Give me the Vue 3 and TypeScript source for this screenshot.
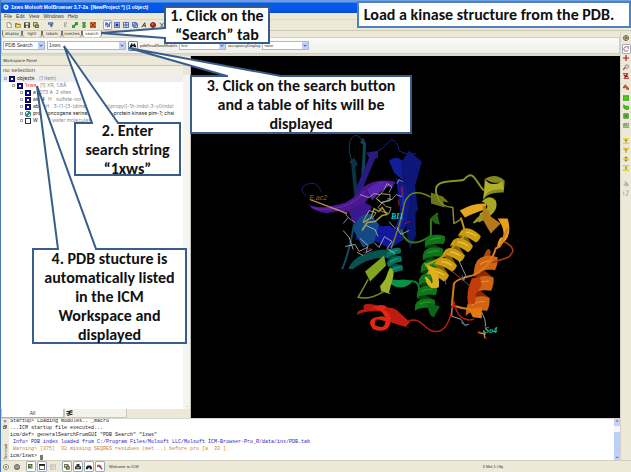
<script setup lang="ts">
import { ref } from 'vue'

interface Shape { d: string; f?: string; s?: string; w?: number }
interface Icon { name: string; shapes: Shape[]; framed?: boolean; gap?: boolean; wide?: boolean }

const page = 'M1.5 .5h3.5l2 2v5h-5.5z'
const mainIcons: Icon[] = [
  { name: 'New', shapes: [{ d: page, f: '#fffbe0', s: '#8a8650' }, { d: 'M5 .5v2h2', s: '#8a8650' }] },
  { name: 'Open', shapes: [{ d: 'M.5 7V2h2.500l1 1h3v4z', f: '#c9a42c', s: '#6d5a1c' }, { d: 'M1 7l1.500-3h5L6 7z', f: '#f4dc70' }] },
  { name: 'Save', shapes: [{ d: 'M.5 1h7v6.500h-7z', f: '#5f5a20', s: '#222' }, { d: 'M2 1h4v2.500H2zM2.500 5h3v2.500h-3z', f: '#eee' }] },
  { name: 'Save picture', shapes: [{ d: 'M.5 .5h5v5h-5z', f: '#e8dc60', s: '#4a4620' }, { d: 'M3 4h4.500v3.500H3z', f: '#b3c050', s: '#333' }] },
  { name: 'Tools', gap: true, shapes: [{ d: 'M.5 1h6v2h-6z', f: '#98b4e8', s: '#2b438f' }, { d: 'M4.500 3v4M2.500 5h4', s: '#2d3c8c' }] },
  { name: 'Residue', gap: true, shapes: [{ d: 'M2 7V1h2.500q2 1.500-2.500 3l3 3', s: '#999990' }] },
  { name: 'Link', shapes: [{ d: 'M.5 4.500h3v3h-3zM4.500 .5h3v3h-3z', f: '#34c63a', s: '#167a1c' }, { d: 'M3 5l3-3', s: '#169020', w: 2 }] },
  { name: 'Chain', shapes: [{ d: 'M2.500 0h3v3h-3zM2.500 4h3v3.500h-3z', f: '#48d63d', s: '#207c25' }] },
  { name: 'Clear', shapes: [{ d: 'M.5 .5h7v7h-7z', f: '#e5a42a', s: '#9a4510' }, { d: 'M1 1l6 6M7 1L1 7', s: '#9d2813', w: 1.5 }] },
  { name: 'Full display', gap: true, framed: true, shapes: [{ d: 'M0 7V1h2v3H0M3 1v6h1q2-3-1-6M6 7V1h2', s: '#293db2' }] },
  { name: 'Center', shapes: [{ d: 'M.5 .5h7v7h-7z', f: '#dfe8ff', s: '#2842a0' }, { d: 'M2 2h4v4H2z', f: '#263c9d' }] },
  { name: 'Grid', shapes: [{ d: 'M.5 .5h7v7h-7zM4 .5v7M.5 4h7', f: '#e1eafa', s: '#203b9a' }] },
  { name: 'Windows', shapes: [{ d: 'M.5 .5h5v5h-5zM2.500 2.500h5v5h-5z', f: '#d8e6ff', s: '#223d9a' }] },
  { name: 'Font', shapes: [{ d: 'M1 7l4-6 1 6M2.500 5h3', s: '#111' }] },
  { name: 'Sphere', shapes: [{ d: 'M4 .5a3.500 3.500 0 1 0 .1 0', f: '#b52418', s: '#601510' }, { d: 'M2.500 2h2v1.500h-2z', f: '#f8a08a' }] },
  { name: 'Cut', shapes: [{ d: 'M1 1l5 6M6 1L2 7', s: '#333a62' }] },
]

const sideIcons: Icon[] = [
  { name: 'Settings', shapes: [{ d: 'M4 .5a3.500 3.500 0 1 0 .1 0', f: '#a6a475', s: '#6b6a42', w: 1.2 }, { d: 'M3 4h2', s: '#33331c', w: 1.5 }] },
  { name: 'Rotate', framed: true, gap: true, shapes: [{ d: 'M4 1Q1 1 1 4t3 3l3-1M4 1h3v3', s: '#93324b' }] },
  { name: 'Translate', shapes: [{ d: 'M4 0v8M0 4h8', s: '#a71919', w: 1.5 }] },
  { name: 'Zoom', shapes: [{ d: 'M5 1a2.300 2.300 0 1 0 .1 0', f: '#ddd', s: '#666' }, { d: 'M3 5L0 7.500', s: '#c9231b', w: 1.5 }] },
  { name: 'Clip', shapes: [{ d: 'M0 1h7M1 7h7M1 3l6 2M6 2L2 6', s: '#a2191e', w: 1.5 }] },
  { name: 'Pick', gap: true, shapes: [{ d: 'M0 5l3-4 3 3 2 3H5V5z', f: '#d77628', s: '#a72718' }] },
  { name: 'Box', gap: true, shapes: [{ d: 'M0 1h8v6H0z', f: '#55cb16', s: '#2a8b0d' }] },
  { name: 'Lasso', shapes: [{ d: 'M1 1l2 2q5-1 5 2t-4 2-3-4z', f: '#5ec71b', s: '#257c17' }] },
  { name: 'Residue box', shapes: [{ d: 'M1 1h6v6H1z', f: '#70b348', s: '#357b22' }, { d: 'M3 3h2v2H3z', f: '#0b740b' }] },
  { name: 'All', shapes: [{ d: 'M0 7h8M1 6V2h2v4M5 1v5M7 1v5M1 4h2', s: '#477b37' }] },
  { name: 'Top', wide: true, shapes: [{ d: 'M0 0h8v2H0zM0 6h8v2H0z', f: '#e8d13b' }, { d: 'M4 2v4M2 3h4', s: '#8d5d13' }] },
  { name: 'Front', shapes: [{ d: 'M0 1h8v2H0z', f: '#e2bf28' }, { d: 'M4 3v5M2 4h4', s: '#9c6814' }] },
  { name: 'Middle', shapes: [{ d: 'M0 3h8v2H0z', f: '#e5d02e' }, { d: 'M4 0v8M2 2h4M2 6h4', s: '#90801c' }] },
  { name: 'Slab', shapes: [{ d: 'M0 0h8v2H0zM0 6h8v2H0z', f: '#e2d02c' }, { d: 'M4 2v4M3 4h2', s: '#625f18' }] },
  { name: 'Hand', wide: true, shapes: [{ d: 'M2 1l3 1 1 3-2 2-3-3h5l1 3', s: '#929289' }] },
  { name: 'Number', shapes: [{ d: 'M1 7V2M4 1h3v2L4 7h3', s: '#a3a195' }] },
]

const statusIcons: Icon[] = [
  { name: 'Stop', shapes: [{ d: 'M4 .5a3.500 3.500 0 1 0 .1 0M2.500 2.500l3 3M5.500 2.500l-3 3', s: '#77776c' }] },
  { name: 'Halt', shapes: [{ d: 'M2.500 .5h3l2 2v3l-2 2h-3l-2-2v-3z', f: '#85857b', s: '#66665d' }, { d: 'M2 4h4', s: '#ccc' }] },
  { name: 'Workspace', framed: true, gap: true, shapes: [{ d: 'M0 0h6v6H0z', f: '#56653a' }, { d: 'M1 2h3M3 4h4v3', s: '#cee68d' }] },
  { name: 'Terminal', framed: true, shapes: [{ d: 'M.5 .5h7v7h-7z', f: '#fff', s: '#222' }, { d: 'M0 0h8v2.500H0z', f: '#222' }] },
  { name: 'Table', shapes: [{ d: 'M.5 1h7v6h-7zM.5 3h7M3 3v4', s: '#bbb8ab' }] },
  { name: 'Copy', framed: true, gap: true, shapes: [{ d: 'M.5 .5h5v4h-5z', f: '#e8dc5b', s: '#333' }, { d: 'M3 3h4v4H3z', f: '#acba4a', s: '#333' }] },
  { name: 'Print', framed: true, shapes: [{ d: 'M0 3h8v4H0zM2 0h4v3H2z', f: '#333' }, { d: 'M2 5h4', s: '#fff' }] },
  { name: 'Find', framed: true, shapes: [{ d: 'M0 4l2-2h4l2 2v3H5V5H3v2H0z', f: '#222' }] },
  { name: 'Pointer', framed: true, shapes: [{ d: 'M0 1h4v3H0z', f: '#777' }, { d: 'M3 3l4 4M5 2v3', s: '#b32c22', w: 1.5 }] },
]

const tabs = ['display', 'light', 'labels', 'meshes', 'search']
const activeTab = ref('search')
const query = ref('1xws')

interface Node { depth: number; name: string; note: string; icon: 'on' | 'seq' | 'off'; red?: boolean }
const nodes: Node[] = [
  { depth: 0, name: 'objects', note: '  (1 item)', icon: 'on' },
  { depth: 1, name: '1xws', note: ' [1] XR, 1.8Å', icon: 'on', red: true },
  { depth: 2, name: 'a', note: ' 273 A  2 sites', icon: 'on' },
  { depth: 2, name: 'aso4', note: ' H   sulfate-ion (so4-)', icon: 'on' },
  { depth: 2, name: 'abi1', note: ' H   3-{1-[3-(dimethylamino)propyl]-1h-indol-3-yl}indol', icon: 'on' },
  { depth: 2, name: 'proto-oncogene serine/threonine-protein kinase pim-1; chai', note: '', icon: 'seq' },
  { depth: 2, name: 'W', note: ' 242 water molecules', icon: 'off' },
]

function pt(x: number, y: number): string {
  return `${x.toFixed(1)} ${y.toFixed(1)}`
}

// Alternating back and front bands wound around the segment (x1,y1)-(x2,y2).
function helix(x1: number, y1: number, x2: number, y2: number, turns: number, r: number, back: string, front: string, shine: string): Shape[] {
  const len = Math.hypot(x2 - x1, y2 - y1)
  const ux = (x2 - x1) / len
  const uy = (y2 - y1) / len
  const step = len / turns
  const at = (along: number, side: number): string => pt(x1 + ux * along - uy * side, y1 + uy * along + ux * side)
  const backs: Shape[] = []
  const fronts: Shape[] = []
  for (let i = 0; i < turns; i++) {
    const a = i * step
    const h = step * 0.64
    fronts.push({ f: front, d: `M${at(a, -r)}C${at(a - step * 0.1, -r * 0.2)} ${at(a + step * 0.1, r * 0.9)} ${at(a + step * 0.45, r)}Q${at(a + step * 0.6, r * 1.15)} ${at(a + step * 0.45 + h, r)}C${at(a + h + step * 0.2, r * 0.8)} ${at(a + h, -r * 0.2)} ${at(a + h, -r)}Q${at(a + h * 0.5, -r * 1.2)} ${at(a, -r)}Z` })
    fronts.push({ s: shine, w: 1.2, d: `M${at(a + step * 0.22, -r * 0.6)}Q${at(a + step * 0.25, r * 0.1)} ${at(a + step * 0.5, r * 0.6)}` })
    if (i < turns - 1) {
      backs.push({ f: back, d: `M${at(a + step * 0.5, r)}L${at(a + step, -r)}L${at(a + step + h * 0.8, -r)}Q${at(a + step, 0)} ${at(a + step * 0.5 + h, r)}Z` })
    }
  }
  return [...backs, ...fronts]
}

const ribbons: Shape[] = [
  { d: 'M356 217L351 164 349 162 354 158 358 165 355 167 360 216', f: '#0b3346' },
  { d: 'M359 214L363 145 360 143 363 138 366 144 364 187 361 216', f: '#104259' },
  { d: 'M352 162C345 144 352 134 357 136Q362 138 363 143', s: '#123f57' },
  { d: 'M354 193L369 158 366 153 378 151 378 158 375 159 360 195', f: '#291a80' },
  { d: 'M377 152Q385 147 391 140Q398 141 399 151Q405 155 416 154', s: '#1a1f92' },
  { d: 'M389 161Q397 154 405 164L416 181 410 187 400 178 394 173z', f: '#101e99' },
  { d: 'M401 163L409 151 422 162 415 186 418 210 408 226 403 187z', f: '#0c1778' },
  { d: 'M396 178Q411 185 410 211Q406 235 393 244L380 245Q398 231 400 211z', f: '#101a8d' },
  { d: 'M401 188Q407 208 399 230', s: '#2330b8', w: 1.5 },
  { d: 'M362 218Q374 229 390 226L405 239 390 249 374 241 355 240z', f: '#12189c' },
  { d: 'M410 196l5-5 1 45-6 14-4-20z', f: '#0b1770' },
  { d: 'M321 192Q317 180 305 185Q298 191 306 196', s: '#3d126e' },
  { d: 'M306 204Q319 211 338 205Q351 203 363 188Q374 178 396 182L392 188Q378 184 368 199Q358 216 340 211Q318 218 307 204', f: '#4b178e' },
  { d: 'M367 189L377 183Q385 180 393 185Q382 188 372 201', f: '#5825ac' },
  { d: 'M312 208Q326 212 342 207Q356 203 365 191', s: '#6a2cb4' },
  { d: 'M348 211L364 203 372 207 361 228 354 225z', f: '#3c168c' },
  { d: 'M353 230Q358 214 370 214L379 225 374 243 363 248z', f: '#134a86' },
  { d: 'M354 224Q350 250 342 270', s: '#0e4c60', w: 2 },
  { d: 'M348 269Q357 251 387 250L397 248 395 260Q374 254 352 270z', f: '#07534f' },
  ...helix(393, 249, 396, 275, 3, 7, '#03443b', '#08705a', '#129a7e'),
  { d: 'M387 271Q388 283 402 280L413 281 410 285Q398 293 387 281z', f: '#089349' },
  { d: 'M411 282Q420 281 419 293L424 299', s: '#087d32', w: 2 },
  { d: 'M365 272L384 256 386 266 383 269 370 282 372 286z', f: '#80a621' },
  { d: 'M385 280L390 268Q395 271 393 278L389 293 391 295 381 292 380 287z', f: '#9bb529' },
  { d: 'M368 280Q362 291 358 298Q369 301 384 292', s: '#739121', w: 1.5 },
  { d: 'M391 249Q400 225 403 210Q407 184 432 198', s: '#71861d', w: 1.5 },
  { d: 'M431 193l12 4 6 6-6-1 2 6-14-4z', f: '#68751b' },
  { d: 'M437 196C431 178 452 183 464 180C474 169 475 181 484 191', s: '#879022', w: 2 },
  { d: 'M437 196Q440 207 453 208L454 224 462 219', s: '#8a8b22', w: 1.5 },
  { d: 'M401 230C406 249 420 244 431 236Q431 226 431 220L438 214', s: '#347918', w: 2 },
  { d: 'M430 219l7-6 3 12-5-1z', f: '#236313' },
  { d: 'M485 179Q496 173 505 181L504 193Q489 192 483 200L485 187Q495 191 500 183Q491 184 485 179', f: '#858a1e' },
  { d: 'M485 179Q490 188 503 182L504 190Q487 188 484 200z', f: '#b2b02b' },
  { d: 'M482 202Q490 194 496 201Q501 213 479 223L480 214Q494 207 482 202', f: '#a7a728' },
  { d: 'M473 223Q482 212 492 210L483 220 474 224z', f: '#9d9121' },
  ...helix(436, 235, 424, 312, 6, 9, '#06410c', '#107519', '#259a2c'),
  ...helix(474, 231, 434, 280, 5, 9, '#806407', '#cf9d14', '#f0c53c'),
  { d: 'M424 263L435 269Q440 276 439 288Q427 292 425 277Q428 277 432 284Q435 280 424 263', f: '#dfb21d' },
  { d: 'M427 304l13 3-6 11q-5 0-7-14', f: '#0a6517' },
  { d: 'M425 266Q453 255 457 240Q466 242 464 228L461 218', s: '#bf9716', w: 2 },
  { d: 'M460 211Q473 203 487 204L485 210Q473 214 465 218z', f: '#e6a622' },
  { d: 'M483 205Q489 211 491 217L501 224 491 234 483 220z', f: '#b47919' },
  { d: 'M498 219L508 219Q513 236 503 244Q499 250 497 249Q499 236 503 238Q506 231 498 219', f: '#ea9e1d' },
  { d: 'M486 252Q489 247 491 252L489 267 480 266z', f: '#a44913' },
  ...helix(488, 256, 476, 317, 3, 10, '#8a2808', '#cf6414', '#ee8d32'),
  { d: 'M472 279l8-2 2 9-6 9-1 10-7-1q-2-12 4-25z', f: '#c33c0c' },
  { d: 'M469 310l13-2 0 11-9-1z', f: '#e77913' },
  { d: 'M508 229L500 247 496 249Q490 269 473 276Q455 280 454 285L452 306Q461 309 471 310', s: '#d97c1b', w: 2 },
  { d: 'M504 242Q520 250 508 258Q500 261 492 263', s: '#a93d0d', w: 1.5 },
  { d: 'M451 271L466 283 471 288', s: '#9a4c15' },
  { d: 'M357 316Q356 311 364 310Q360 302 377 306L382 312Q371 311 360 314', f: '#b31a10' },
  { d: 'M371 309Q389 299 391 319Q390 336 373 330Q364 319 381 317Q387 317 385 322Q373 317 375 326Q387 332 385 318Q382 309 371 309', f: '#e22614' },
  { d: 'M383 310Q390 306 397 311L410 323 406 327 410 329 390 323Q394 316 383 310', f: '#c01b10' },
  { d: 'M408 322C424 316 424 335 439 332C448 330 452 314 454 302Q458 324 474 320', s: '#b4200e', w: 1.5 },
]

const sticks: Shape[] = [
  { d: 'M310 200L347 214', s: '#dea06a', w: 1.5 },
  { d: 'M360 195l9 3 5-4 6 1 4-5 3-6 5 3-3 6M387 199l5 1 4-5 6 2M377 199l4 4 10-3M345 214l3 4-5 6M348 218l7 5M397 184l2-4 4 2', s: '#aaa9b5' },
  { d: 'M376 199l5-5 9 1 0 6-9 2zM363 222l6-11 7 2-4 6M378 208l4-5 4 4 5 1-2 6-7-2z', s: '#c8c47b' },
  { d: 'M363 223l8-5 3-9 5 3 3-4 5 7-5 1-7 6-8 1-5 8', s: '#c6b94c', w: 1.5 },
  { d: 'M343 231l6 7 4 12M345 247l10-2 4 7 8-4M360 239l8 7-2 7 6-3M374 243l5 5 5-10M357 253l6 3M384 237l8 5-5 7 8 5M366 226l9 4 3 7M397 228l4 7 8-4M389 222l6 7', s: '#bdbfc4' },
  { d: 'M363 253l3 0M402 186l1 10M405 224l5-2M367 250l4-1M398 200l1 6', s: '#b91d25' },
  { d: 'M452 308l0 9 9 3 4 6 4-1M459 261l4 9 3 6-3 5M482 313l3 7 1 7', s: '#c1c2c8' },
  { d: 'M461 323l6 4M445 280l1 5M462 276l3 5', s: '#4e79d5' },
  { d: 'M478 333l8 2M484 331l1 8', s: '#d2bf27', w: 1.5 },
  { d: 'M478 333l3 0M485 337l2 3M485 326l1 4', s: '#db291a' },
]
</script>

<template>
  <div class="app">
    <header class="titlebar">
      <svg class="logo" viewBox="0 0 8 8"><circle cx="4" cy="4" r="3.500" fill="#d7ecff" /><path d="M2 5l2-3 2 3z" fill="#176fc4" /></svg>
      <h1>1xws Molsoft MolBrowser 3.7-2a&nbsp; [NewProject *] (1 object)</h1>
    </header>
    <nav class="menu">
      <button v-for="m in ['File', 'Edit', 'View', 'Windows', 'Help']" :key="m" type="button">{{ m }}</button>
    </nav>
    <div class="toolbar">
      <button v-for="i in mainIcons" :key="i.name" type="button" class="tool" :class="{ framed: i.framed, gap: i.gap }" :aria-label="i.name">
        <svg viewBox="0 0 8 8"><path v-for="(p, n) in i.shapes" :key="n" :d="p.d" :fill="p.f ?? 'none'" :stroke="p.s ?? 'none'" :stroke-width="p.w ?? 1" /></svg>
      </button>
    </div>

    <div class="body">
      <div class="content">
        <div class="tabs">
          <button v-for="t in tabs" :key="t" type="button" :class="{ active: t === activeTab }" @click="activeTab = t">{{ t }}</button>
        </div>
        <form class="search" @submit.prevent>
          <span class="combo kind"><select aria-label="Search type"><option>PDB Search</option></select><svg viewBox="0 0 6 8"><path d="M1.500 3L3 5l1.500-2" /></svg></span>
          <span class="combo query"><input v-model="query" aria-label="Search string" /><svg viewBox="0 0 6 8"><path d="M1.500 3L3 5l1.500-2" /></svg></span>
          <button class="find" type="submit" aria-label="Search"><svg viewBox="0 0 10 8"><path d="M0 5l2-4h2v2h2V1h2l2 4v2H6V5H4v2H0z" fill="#111" /></svg></button>
          <label for="models">pdbReadNewModels</label>
          <span class="combo small"><select id="models"><option>first</option></select><svg viewBox="0 0 6 8"><path d="M1.500 3L3 5l1.500-2" /></svg></span>
          <label for="occ">occupancyDisplay</label>
          <span class="combo small"><select id="occ"><option>none</option></select><svg viewBox="0 0 6 8"><path d="M1.500 3L3 5l1.500-2" /></svg></span>
        </form>

        <div class="workarea">
          <aside class="workspace">
            <h2>Workspace Panel</h2>
            <div class="selection">no selection</div>
            <div class="treewrap">
              <ul class="tree">
                <li v-for="n in nodes" :key="n.name" :class="['depth' + n.depth, { red: n.red }]">
                  <span class="expander"></span>
                  <span class="mark" :class="n.icon"></span>
                  <span class="name">{{ n.name }}</span>
                  <span class="note">{{ n.note }}</span>
                </li>
              </ul>
              <div class="scroll"><span>⌄</span></div>
            </div>
            <div class="sheets">
              <button type="button" class="current">All</button>
              <button type="button" aria-label="Sequences"><svg viewBox="0 0 8 8"><path d="M0 2h3l2 4h3M0 5h3l2-4h3M1 7h3M5 3h3" fill="none" stroke="#222" stroke-width="1.500" /></svg></button>
            </div>
          </aside>
          <main class="viewer">
            <svg viewBox="191 56 429 363" preserveAspectRatio="xMidYMid meet" role="img" aria-label="Kinase structure 1xws">
              <path v-for="(p, n) in ribbons" :key="'r' + n" :d="p.d" :fill="p.f ?? 'none'" :stroke="p.s ?? 'none'" :stroke-width="p.w ?? 1" stroke-linejoin="round" />
              <path v-for="(p, n) in sticks" :key="'s' + n" :d="p.d" fill="none" :stroke="p.s" :stroke-width="p.w ?? 1" stroke-opacity="0.8" />
              <text x="309" y="200" class="site">E.ac2</text>
              <text x="391" y="219" class="ligand">BI1</text>
              <text x="485" y="334" class="ligand">So4</text>
            </svg>
          </main>
        </div>

        <section class="terminal">
          <div class="dock"><span>×</span><svg viewBox="0 0 6 6"><path d="M.5 2h3.500v3.500H.5zM2 2V.5h3.500V4H4" fill="none" stroke="#333" /></svg><span class="vertical">Terminal</span></div>
          <pre>Startup&gt; Loading modules.. _macro
...ICM startup file executed...
icm/def&gt; generalSearchFromGUI "PDB Search" "1xws"
<span class="info"> Info&gt; PDB index loaded from C:/Program Files/Molsoft LLC/Molsoft ICM-Browser-Pro_R/data/inx/PDB.tab</span>
<span class="warn"> Warning&gt; [375]  32 missing SEQRES residues (met ..) before pro [a  33 ]</span>
icm/1xws&gt; <i class="cursor"></i></pre>
          <div class="thumbbar"><b>⌃</b><span></span><b>⌄</b></div>
        </section>
      </div>

      <div class="side">
        <button v-for="i in sideIcons" :key="i.name" type="button" class="tool" :class="{ framed: i.framed, gap: i.gap, wide: i.wide }" :aria-label="i.name">
          <svg viewBox="0 0 8 8"><path v-for="(p, n) in i.shapes" :key="n" :d="p.d" :fill="p.f ?? 'none'" :stroke="p.s ?? 'none'" :stroke-width="p.w ?? 1" /></svg>
        </button>
      </div>
    </div>

    <footer class="status">
      <button v-for="i in statusIcons" :key="i.name" type="button" class="tool" :class="{ framed: i.framed, gap: i.gap }" :aria-label="i.name">
        <svg viewBox="0 0 8 8"><path v-for="(p, n) in i.shapes" :key="n" :d="p.d" :fill="p.f ?? 'none'" :stroke="p.s ?? 'none'" :stroke-width="p.w ?? 1" /></svg>
      </button>
      <span class="welcome">Welcome to ICM</span>
      <span class="count">3 Mol 1 Obj</span>
    </footer>

    <div class="callout headline">Load a kinase structure from the PDB.</div>
    <div class="callout one">1. Click on the<br />“Search” tab</div>
    <div class="callout two">2. Enter<br />search string<br />“1xws”</div>
    <div class="callout three">3. Click on the search button<br />and a table of hits will be<br />displayed</div>
    <div class="callout four">4. PDB stucture is<br />automatically listed<br />in the ICM<br />Workspace and<br />displayed</div>
    <svg class="tails" width="420" height="260" viewBox="0 0 420 260">
      <path d="M166 28H165L101 33 165 38H166" />
      <path d="M92 124V123L64 46 118 123V124" />
      <path d="M227 77V76L129 48 281 76V77" />
      <path d="M58 250V249L37 86 96 249V250" />
    </svg>
  </div>
</template>

<style>
body { margin: 0; }
</style>

<style scoped>
* { box-sizing: border-box; }
.app { position: relative; display: flex; flex-direction: column; height: 100vh; overflow: hidden; background: #ece9d8; font: 5px/7px "Liberation Sans", Arial, sans-serif; color: #333; border-left: 1px solid #4a7ac0; }
button, input, select { font: inherit; color: inherit; padding: 0; margin: 0; border: 0; background: none; border-radius: 0; appearance: none; }
h1, h2, ul, pre { margin: 0; padding: 0; }
svg { display: block; }
.titlebar { flex: 0 0 13px; display: flex; align-items: center; gap: 2px; padding: 1px 2px 0; background: linear-gradient(#6d9fe0 0 2px, #075bea 3px, #0358ec 9px, #0a4bcb); }
.logo { width: 6px; height: 6px; }
h1 { font-size: 5px; line-height: 8px; color: #fff; white-space: nowrap; }
.menu { flex: 0 0 7px; display: flex; gap: 4px; padding: 0 3px; border-bottom: 1px solid #dbd7c3; }
.menu button { line-height: 6px; }
.toolbar { flex: 0 0 11px; display: flex; align-items: center; gap: 2px; padding-left: 4px; border-bottom: 1px solid #cbc8b7; }
.tool { display: flex; align-items: center; justify-content: center; flex: none; width: 7px; height: 8px; }
.tool svg { width: 6px; height: 6px; }
.toolbar .gap { margin-left: 6px; }
.framed { background: #fff; box-shadow: 0 0 0 1px #9baabd; border-radius: 1px; }
.body { flex: 1; min-height: 0; display: flex; }
.content { flex: 1; min-width: 0; display: flex; flex-direction: column; }
.tabs { flex: 0 0 6px; display: flex; padding-left: 1px; }
.tabs button { width: 20px; font: 4px/6px "DejaVu Sans", sans-serif; border: 1px solid #777466; border-width: 0 1px; border-radius: 0 0 3px 3px; }
.tabs .active { background: #fff; }
.search { flex: 0 0 17px; display: flex; align-items: center; gap: 2px; padding: 0 1px; background: linear-gradient(#fafaf8, #efeee8); border: 1px solid #d2cfc0; font-size: 4px; }
.combo { display: flex; height: 9px; border: 1px solid #a9b9d0; background: #fff; }
.combo select, .combo input { flex: 1; min-width: 0; padding-left: 1px; outline: 0; font-size: 5px; }
.combo svg { flex: none; width: 6px; height: 7px; background: #c1d2f8; }
.combo path { fill: none; stroke: #344d83; stroke-width: 1; }
.kind { width: 42px; }
.query { width: 79px; }
.small { width: 47px; }
.small select { font-size: 4px; }
.find { width: 10px; height: 10px; padding: 1px; background: #f6f8fd; border: 1px solid #6d829f; border-radius: 1px; }
.workarea { flex: 1; min-height: 0; display: flex; border-top: 2px solid #dedbcb; }
.workspace { flex: 0 0 190px; display: flex; flex-direction: column; border-right: 1px solid #c4c2b6; }
h2 { flex: 0 0 9px; padding-left: 2px; font: 4px/9px "DejaVu Sans", sans-serif; border-bottom: 1px solid #c6c3b2; }
.selection { flex: 0 0 9px; padding-left: 2px; line-height: 9px; font-size: 6px; color: #555; background: #f0eee5; border-right: 7px solid #e8e5db; }
.treewrap { flex: 1; min-height: 0; display: flex; background: #fff; }
.tree { flex: 1; min-width: 0; list-style: none; overflow: hidden; font: 5px/7px Inter, "Noto Sans", sans-serif; color: #222; }
.tree li { display: flex; align-items: center; gap: 2px; height: 7px; white-space: pre; }
.depth0 { padding-left: 3px; background: #ededed; }
.depth1 { padding-left: 11px; }
.depth2 { padding-left: 19px; }
.expander { flex: none; width: 3px; height: 3px; border: 1px solid #aaa; }
.mark { flex: none; width: 6px; height: 6px; background: #0b0b86; border: 1px solid #070745; }
.mark.on { background: radial-gradient(#fff 0 1px, #1010a8 1px); }
.mark.off { background: #fff; border-color: #333; }
.mark.seq { background: linear-gradient(135deg, #fff 0 35%, #248a8c 35% 65%, #fff 65%); border-color: #477a90; border-radius: 2px; }
.red .name { color: #f02626; }
.note { color: #8a8a8a; }
.scroll { flex: 0 0 7px; display: flex; align-items: flex-end; justify-content: center; background: #f5f4ee; color: #bbb; }
.sheets { flex: 0 0 9px; display: flex; background: #ece9d8; }
.sheets button { width: 63px; border: 1px solid #cbc8ba; border-top: 0; background: #f4f2e9; }
.sheets svg { width: 7px; height: 6px; margin-left: 1px; }
.sheets .current { background: #fff; border-bottom: 1px solid #e8a33a; }
.viewer { flex: 1; min-width: 0; background: #000; }
.viewer svg { width: 100%; height: 100%; }
.site { font: italic 7px "Liberation Sans", sans-serif; fill: #a35f24; }
.ligand { font: italic bold 8px "Liberation Serif", serif; fill: #16c9cf; }
.terminal { flex: 0 0 42px; display: flex; border: solid #d8d7cf; border-width: 1px 0 0; background: #fff; overflow: hidden; }
.dock { flex: 0 0 8px; display: flex; flex-direction: column; align-items: center; padding-bottom: 1px; background: #ece9d8; line-height: 5px; }
.dock svg { width: 4px; height: 4px; margin-top: 1px; }
.vertical { margin-top: auto; writing-mode: vertical-rl; transform: rotate(180deg); font-size: 4px; }
pre { flex: 1; min-width: 0; padding-left: 1px; align-self: flex-end; font: 5px/7px "Liberation Mono", monospace; color: #222; }
.info { color: #2525c8; }
.warn { color: #c9852b; }
.cursor { display: inline-block; width: 3px; height: 5px; background: #777; vertical-align: bottom; }
.thumbbar { flex: 0 0 6px; display: flex; flex-direction: column; background: #f4f5fb; text-align: center; color: #344d83; }
.thumbbar b { flex: 0 0 6px; line-height: 7px; background: #c1d2f8; }
.thumbbar span { flex: 1; margin-top: 6px; background: #bccff8; }
.side { flex: 0 0 11px; display: flex; flex-direction: column; align-items: center; gap: 1px; padding-top: 3px; border-left: 1px solid #d6d3c5; }
.side .gap { margin-top: 2px; }
.side .wide { margin-top: 7px; }
.status { flex: 0 0 12px; display: flex; align-items: center; gap: 3px; padding-left: 1px; border-top: 1px solid #d1cebf; font-size: 4px; }
.status .tool { width: 8px; height: 9px; }
.status .gap { margin-left: 3px; }
.welcome { flex: 1; padding-left: 2px; }
.count { margin-right: 128px; }
.callout { position: absolute; display: flex; align-items: center; justify-content: center; text-align: center; background: #fff; border: 2px solid #385d8a; color: #111; font: bold 16px/19px Carlito, Lato, sans-serif; font-variant-ligatures: none; white-space: nowrap; }
.headline { right: 0; top: 1px; width: 274px; height: 27px; border-color: #4f81bd; padding-right: 10px; }
.one { left: 163px; top: 6px; width: 106px; height: 38px; }
.two { left: 73px; top: 122px; width: 107px; height: 54px; }
.three { left: 189px; top: 75px; width: 222px; height: 59px; }
.four { left: 31px; top: 248px; width: 155px; height: 96px; }
.tails { position: absolute; left: -1px; top: 0; pointer-events: none; }
.tails path { fill: #fff; stroke: #385d8a; stroke-width: 2; stroke-linejoin: miter; stroke-miterlimit: 2; }
</style>
